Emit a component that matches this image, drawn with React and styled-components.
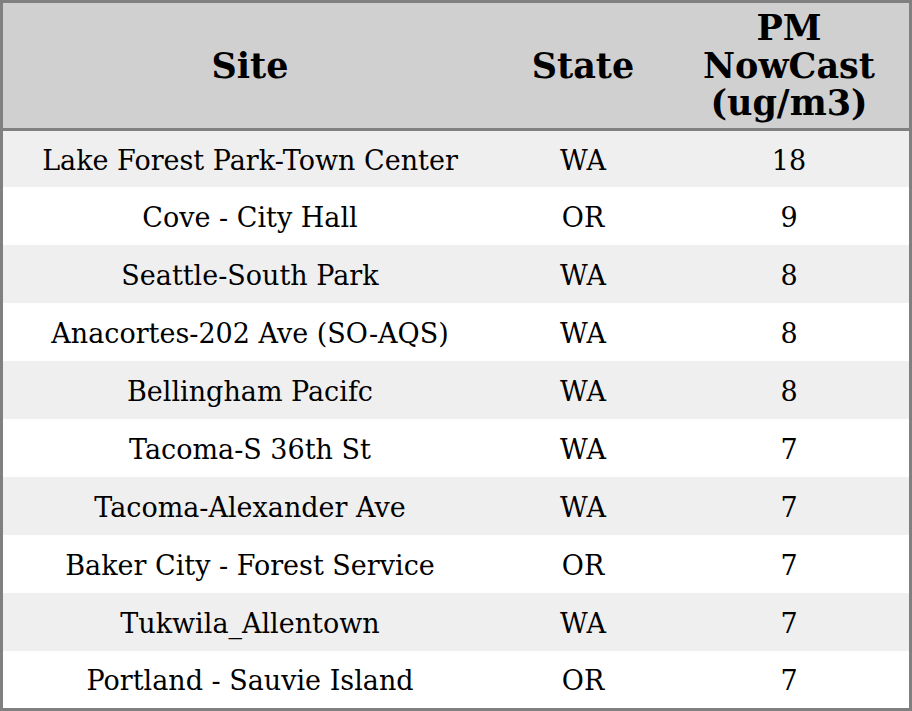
import React from "react";
import styled, { createGlobalStyle } from "styled-components";

const Global = createGlobalStyle`
  html, body { margin: 0; padding: 0; background: #ffffff; }
`;

const Table = styled.table`
  width: 912px;
  border-collapse: separate;
  border-spacing: 0;
  border: 3px solid #808080;
  font-family: "DejaVu Serif", serif;
  color: #000;
  table-layout: fixed;
`;

const Col = styled.col`
  width: ${(p) => p.$w}px;
`;

const HeadRow = styled.tr`
  background: #d0d0d0;
  height: 128px;
`;

const Th = styled.th`
  font-size: 35px;
  font-weight: bold;
  line-height: 37.5px;
  padding: 0;
  text-align: center;
  vertical-align: middle;
  border-bottom: 3px solid #808080;
`;

const Row = styled.tr`
  background: ${(p) => (p.$alt ? "#efefef" : "#ffffff")};
  height: ${(p) => p.$h}px;
`;

const Td = styled.td`
  font-size: 27px;
  padding: 2px 0 0;
  text-align: center;
  vertical-align: middle;
`;

const rows = [
  ["Lake Forest Park-Town Center", "WA", "18"],
  ["Cove - City Hall", "OR", "9"],
  ["Seattle-South Park", "WA", "8"],
  ["Anacortes-202 Ave (SO-AQS)", "WA", "8"],
  ["Bellingham Pacifc", "WA", "8"],
  ["Tacoma-S 36th St", "WA", "7"],
  ["Tacoma-Alexander Ave", "WA", "7"],
  ["Baker City - Forest Service", "OR", "7"],
  ["Tukwila_Allentown", "WA", "7"],
  ["Portland - Sauvie Island", "OR", "7"],
];

const rowHeight = (i) => (i === 0 ? 56 : i === rows.length - 1 ? 57 : 58);

export default function App() {
  return (
    <>
      <Global />
      <Table>
        <colgroup>
          <Col $w={494} />
          <Col $w={172} />
          <Col $w={240} />
        </colgroup>
        <thead>
          <HeadRow>
            <Th>Site</Th>
            <Th>State</Th>
            <Th>
              PM
              <br />
              NowCast
              <br />
              (ug/m3)
            </Th>
          </HeadRow>
        </thead>
        <tbody>
          {rows.map((r, i) => (
            <Row key={i} $alt={i % 2 === 0} $h={rowHeight(i)}>
              <Td>{r[0]}</Td>
              <Td>{r[1]}</Td>
              <Td>{r[2]}</Td>
            </Row>
          ))}
        </tbody>
      </Table>
    </>
  );
}
